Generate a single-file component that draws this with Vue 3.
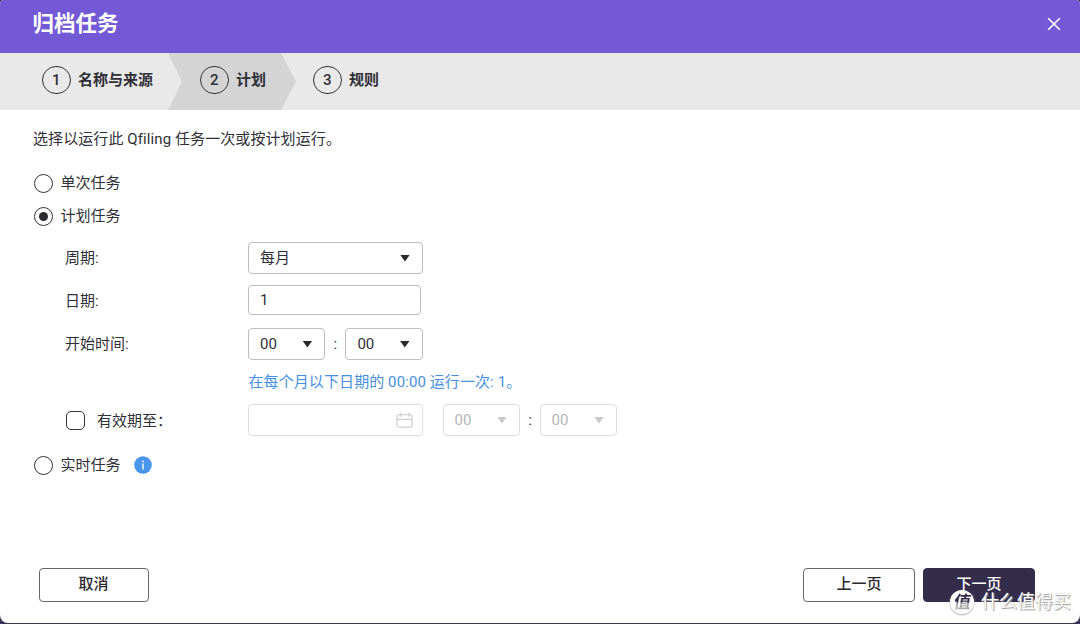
<script setup>
import { ref, computed } from 'vue'

const steps = ['名称与来源', '计划', '规则']
const currentStep = ref(1)

const taskType = ref('schedule')
const period = ref('每月')
const day = ref('1')
const hour = ref('00')
const minute = ref('00')
const hasExpiry = ref(false)

const summary = computed(
  () => `在每个月以下日期的 ${hour.value}:${minute.value} 运行一次: ${day.value}。`
)
</script>

<template>
  <div class="page">
    <div class="dialog">
      <header class="header">
        <h1>归档任务</h1>
        <svg class="close" width="14" height="14" viewBox="0 0 14 14">
          <path d="M1.2 1.2 12.8 12.8M12.8 1.2 1.2 12.8" fill="none" stroke="#fff" stroke-width="1.6" />
        </svg>
      </header>

      <nav class="steps">
        <div
          v-for="(step, i) in steps"
          :key="step"
          class="step"
          :class="['step-' + (i + 1), { active: i === currentStep }]"
        >
          <span class="num">{{ i + 1 }}</span>
          <span class="name">{{ step }}</span>
        </div>
      </nav>

      <main class="content">
        <p class="intro">选择以运行此 Qfiling 任务一次或按计划运行。</p>

        <div class="option" @click="taskType = 'once'">
          <span class="radio" :class="{ checked: taskType === 'once' }"></span>
          <span>单次任务</span>
        </div>
        <div class="option second" @click="taskType = 'schedule'">
          <span class="radio" :class="{ checked: taskType === 'schedule' }"></span>
          <span>计划任务</span>
        </div>

        <div class="form">
          <div class="row">
            <label>周期:</label>
            <div class="select wide">{{ period }}<i class="caret"></i></div>
          </div>
          <div class="row date-row">
            <label>日期:</label>
            <input v-model="day" type="text" />
          </div>
          <div class="row time-row">
            <label>开始时间:</label>
            <div class="select">{{ hour }}<i class="caret"></i></div>
            <span class="colon">:</span>
            <div class="select">{{ minute }}<i class="caret"></i></div>
          </div>
          <p class="summary">{{ summary }}</p>
          <div class="row">
            <label class="expiry" @click="hasExpiry = !hasExpiry">
              <span class="checkbox" :class="{ checked: hasExpiry }"></span>
              <span>有效期至：</span>
            </label>
            <div class="select wide disabled date">
              <svg width="17" height="17" viewBox="0 0 17 17" fill="none" stroke="#d0d0d2" stroke-width="1.3">
                <rect x="1" y="2.6" width="15" height="12.6" rx="2" />
                <path d="M1 7.3h15M4.5 0.8v4M12.5 0.8v4" />
              </svg>
            </div>
            <div class="select disabled">00<i class="caret"></i></div>
            <span class="colon">:</span>
            <div class="select disabled">00<i class="caret"></i></div>
          </div>
        </div>

        <div class="option last" @click="taskType = 'realtime'">
          <span class="radio" :class="{ checked: taskType === 'realtime' }"></span>
          <span>实时任务</span>
          <svg class="info" width="18" height="18" viewBox="0 0 18 18">
            <circle cx="9" cy="9" r="8.8" fill="#4a96ec" />
            <circle cx="9" cy="5.4" r="0.9" fill="#fff" />
            <path d="M9 7.6v5.8" stroke="#fff" stroke-width="1.4" />
          </svg>
        </div>
      </main>

      <footer class="footer">
        <button class="btn cancel">取消</button>
        <button class="btn">上一页</button>
        <button class="btn primary">下一页</button>
      </footer>
    </div>

    <div class="watermark">
      <span class="badge"><span class="glyph">值</span></span>
      <span class="brand">什么值得买</span>
    </div>
  </div>
</template>

<style>
body {
  margin: 0;
  overflow: hidden;
}
</style>

<style scoped>
.page {
  position: relative;
  height: 624px;
  background: #3b3654;
  font-family: Roboto, 'Noto Sans CJK SC', sans-serif;
  font-size: 15px;
  line-height: 20px;
  color: #2f2f37;
}

.dialog {
  display: flex;
  flex-direction: column;
  height: 623px;
  background: #fff;
  border-radius: 4px 4px 8px 8px;
  overflow: hidden;
}

.header {
  display: flex;
  align-items: center;
  justify-content: space-between;
  height: 53px;
  box-sizing: border-box;
  padding: 0 19px 5px 32.5px;
  background: #7359d6;
  color: #fff;
}

h1 {
  margin: 0;
  font-size: 21.5px;
  line-height: 30px;
  font-weight: 700;
}

.close {
  cursor: pointer;
}

.steps {
  display: flex;
  height: 57px;
  background: #e9e9e9;
}

.step {
  display: flex;
  align-items: center;
  gap: 8px;
  box-sizing: border-box;
  padding-bottom: 3px;
  font-weight: 500;
}

.step-1 {
  width: 168px;
  padding-left: 42px;
}

.step-2 {
  width: 128px;
  padding-left: 32px;
}

.step-3 {
  padding-left: 17px;
}

.step.active {
  background: #d4d4d4;
  clip-path: polygon(0 0, 113px 0, 100% 50%, 113px 100%, 0 100%, 14px 50%);
}

.num {
  display: flex;
  align-items: center;
  justify-content: center;
  width: 28.5px;
  height: 28.5px;
  box-sizing: border-box;
  border: 1.5px solid #333;
  border-radius: 50%;
}

.name {
  margin-left: -0.5px;
  font-weight: 700;
}

.content {
  flex: 1;
  padding: 19px 33px 0;
}

.intro {
  margin: 0 0 24px;
  letter-spacing: 0.09px;
}

.option {
  display: flex;
  align-items: center;
  height: 20px;
  gap: 8px;
  padding-left: 0.5px;
  cursor: pointer;
}

.option.second {
  margin-top: 13px;
}

.option.last {
  margin-top: 19px;
}

.radio {
  display: flex;
  align-items: center;
  justify-content: center;
  width: 19px;
  height: 19px;
  box-sizing: border-box;
  border: 1.5px solid #333338;
  border-radius: 50%;
}

.radio.checked::after {
  content: '';
  width: 9px;
  height: 9px;
  border-radius: 50%;
  background: #2b2b31;
}

.info {
  margin: -1px 0 0 5px;
}

.form {
  padding: 16px 0 0 32px;
}

.row {
  display: flex;
  align-items: center;
  height: 32px;
}

.row > label {
  width: 183px;
}

.date-row {
  height: 30px;
  margin-top: 11px;
}

.date-row > label {
  padding-top: 2px;
}

.time-row {
  margin-top: 13px;
}

.select {
  display: flex;
  align-items: center;
  justify-content: space-between;
  width: 77.4px;
  height: 32px;
  box-sizing: border-box;
  padding: 0 12px 0 11px;
  border: 1px solid #bdbdc1;
  border-radius: 4px;
  background: #fff;
}

.select.wide {
  width: 175px;
}

.select.disabled {
  width: 77px;
  padding-left: 10.5px;
  border-color: #dedee0;
  color: #b5b5ba;
}

.select.wide.disabled {
  width: 175px;
}

.select.date {
  justify-content: flex-end;
  padding-right: 9px;
  margin-right: 20px;
}

.caret {
  width: 10px;
  height: 7px;
  background: #29292e;
  clip-path: polygon(0 0, 100% 0, 50% 100%);
}

.disabled .caret {
  background: #c9c9cd;
}

.colon {
  width: 20px;
  text-align: center;
}

input {
  width: 173px;
  height: 30px;
  box-sizing: border-box;
  padding: 0 11px;
  border: 1px solid #bdbdc1;
  border-radius: 4px;
  font: inherit;
  color: inherit;
  outline: none;
}

.summary {
  margin: 12px 0 12px 183.5px;
  color: #468fe2;
  letter-spacing: 0.09px;
}

.row > .expiry {
  display: flex;
  align-items: center;
  gap: 12px;
  padding-top: 1px;
}

.row > .expiry > span:last-child {
  padding-top: 1px;
}

.checkbox {
  width: 19px;
  height: 19px;
  margin-left: 1px;
  box-sizing: border-box;
  border: 1.5px solid #333338;
  border-radius: 5px;
}

.checkbox.checked {
  background: #2b2b31;
}

.footer {
  display: flex;
  align-items: center;
  height: 34px;
  padding: 0 45px 21px 38.5px;
}

.btn {
  width: 112px;
  height: 34px;
  padding: 0 0 2px;
  border: 1px solid #66666b;
  border-radius: 4px;
  background: #fff;
  font: inherit;
  font-weight: 500;
  color: #29292e;
  cursor: pointer;
}

.cancel {
  width: 110px;
  margin-right: auto;
}

.primary {
  margin-left: 8px;
  border-color: #332c4b;
  background: #332c4b;
  color: #fff;
}

/* sits over the dialog corner */
.watermark {
  position: absolute;
  left: 950px;
  top: 589px;
  display: flex;
  align-items: center;
  gap: 7px;
  color: #fff;
}

.badge {
  display: flex;
  align-items: center;
  justify-content: center;
  width: 24px;
  height: 24px;
  border-radius: 50%;
  background: #fff;
  box-shadow: 0 1px 2px #aaa;
}

.glyph {
  background: linear-gradient(#332c4b 50%, #aaa 58%);
  background-clip: text;
  color: transparent;
  font-size: 17px;
  font-weight: 700;
  line-height: 18px;
  transform: skewX(-8deg);
}

.brand {
  font-size: 18px;
  line-height: 26px;
  text-shadow: 1px 1px 1px #999, 0 0 1px #aaa;
  white-space: nowrap;
}
</style>
